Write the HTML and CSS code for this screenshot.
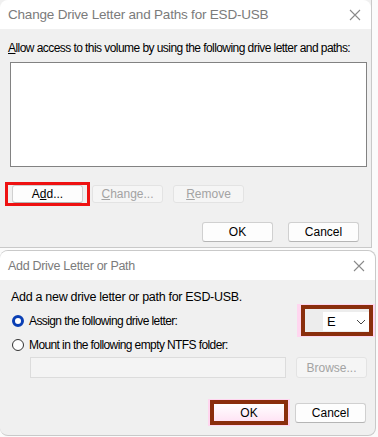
FILE: index.html
```html
<!DOCTYPE html>
<html lang="en">
  <head>
    <meta charset="UTF-8" />
    <title>Drive Letter and Paths</title>
    <link rel="stylesheet" href="styles.css">
  </head>
  <body>
    <div class="dialog dialog--paths">
      <div class="titlebar">
        <span class="titlebar__text">Change Drive Letter and Paths for ESD-USB</span>
        <svg class="titlebar__close" width="12" height="12" viewBox="0 0 12 12">
          <path d="M1 1 L11 11 M11 1 L1 11" stroke="#8a8a8a" stroke-width="1.1" fill="none" />
        </svg>
      </div>
      <div class="dialog__body">
        <div class="label"><u>A</u>llow access to this volume by using the following drive letter and paths:</div>
        <div class="listbox"></div>
        <div class="row row--actions">
          <div class="marked-red">
            <button class="btn">A<u>d</u>d...</button>
          </div>
          <button class="btn" disabled><u>C</u>hange...</button>
          <button class="btn" disabled><u>R</u>emove</button>
        </div>
        <div class="row row--footer">
          <button class="btn">OK</button>
          <button class="btn">Cancel</button>
        </div>
      </div>
    </div>

    <div class="dialog dialog--add">
      <div class="titlebar">
        <span class="titlebar__text titlebar__text--small">Add Drive Letter or Path</span>
        <svg class="titlebar__close" width="12" height="12" viewBox="0 0 12 12">
          <path d="M1 1 L11 11 M11 1 L1 11" stroke="#8a8a8a" stroke-width="1.1" fill="none" />
        </svg>
      </div>
      <div class="dialog__body">
        <div class="label label--intro">Add a new drive letter or path for ESD-USB.</div>
        <div class="option option--assign">
          <span class="radio radio--on"></span>
          <span class="option__text">Assign the following drive letter:</span>
          <div class="marked-brown marked-brown--select">
            <div class="select-frame">
              <div class="select">
                <span>E</span>
                <svg width="10" height="6" viewBox="0 0 10 6">
                  <path d="M1 1 L5 5 L9 1" stroke="#444" stroke-width="1" fill="none" />
                </svg>
              </div>
            </div>
          </div>
        </div>
        <div class="option option--mount">
          <span class="radio"></span>
          <span class="option__text">Mount in the following empty NTFS folder:</span>
        </div>
        <div class="row row--folder">
          <div class="textbox"></div>
          <button class="btn" disabled>Browse...</button>
        </div>
        <div class="row row--footer2">
          <div class="marked-brown">
            <button class="btn btn--ok">OK</button>
          </div>
          <button class="btn">Cancel</button>
        </div>
      </div>
    </div>
  </body>
</html>
```

FILE: styles.css
```css
* {
  margin: 0;
  padding: 0;
  box-sizing: border-box;
}

body {
  background-color: #fbfbfb;
  font-family: "Liberation Sans", Arial, sans-serif;
  font-size: 12px;
  color: #000;
  width: 378px;
  height: 437px;
  overflow: hidden;
}

.dialog {
  background-color: #f0f0f0;
  border: 1px solid #c9c9c9;
  display: flex;
  flex-direction: column;
}

.dialog--paths {
  width: 372px;
  height: 248px;
  border-top: none;
  border-left: none;
}

.dialog--add {
  width: 376px;
  height: 186px;
  margin-top: 2px;
  border-radius: 8px;
  border-left: none;
}

.titlebar {
  height: 29px;
  background-color: #fff;
  display: flex;
  align-items: center;
  justify-content: space-between;
  padding: 0 10px 0 8px;
  border-radius: 8px 8px 0 0;
}

.titlebar__text {
  font-size: 13.5px;
  color: #7b7b7b;
  letter-spacing: -0.2px;
}

.titlebar__text--small {
  font-size: 12.5px;
  letter-spacing: -0.3px;
}

.dialog__body {
  display: flex;
  flex-direction: column;
  padding: 0 0 0 8px;
}

.label {
  margin-top: 12px;
  line-height: 15px;
  letter-spacing: -0.56px;
}

.listbox {
  width: 357px;
  height: 105px;
  margin: 6px 0 0 2px;
  background-color: #fff;
  border: 1px solid #828282;
}

.row {
  display: flex;
  align-items: center;
}

.btn {
  width: 71px;
  height: 19px;
  font-family: inherit;
  font-size: 12px;
  color: #000;
  background-color: #fdfdfd;
  border: 1px solid #d0d0d0;
  border-bottom-color: #b5b5b5;
  border-radius: 3px;
}

.btn:disabled {
  color: #a3a3a3;
  background-color: #f5f5f5;
  border-color: #e3e3e3;
}

.row--actions {
  margin: 15px 0 0 -3px;
}

.marked-red {
  border: 3px solid #ee1111;
  padding: 0 4px;
  margin-right: 2px;
}

.marked-red .btn {
  height: 18px;
}

.row--actions > .btn {
  height: 18px;
  margin-right: 10px;
}

.row--footer {
  margin: 16px 0 0 194px;
  gap: 15px;
}

.row--footer .btn {
  height: 20px;
}

.label--intro {
  margin: 10px 0 0 3px;
  line-height: 14px;
  font-size: 12.5px;
  letter-spacing: -0.3px;
}

.option {
  display: flex;
  align-items: center;
  margin-left: 4px;
}

.option--assign {
  height: 33px;
}

.option__text {
  margin-left: 5px;
  font-size: 12px;
  letter-spacing: -0.6px;
}

.radio {
  width: 12px;
  height: 12px;
  border-radius: 50%;
  border: 1px solid #333;
  background-color: #fff;
}

.radio--on {
  border: 3.5px solid #0a3fb4;
}

.marked-brown {
  background-color: #ffd6ef;
  padding: 1px 2px;
}

.marked-brown--select {
  margin-left: auto;
  width: 78px;
  padding: 1px 2px 1px 4px;
}

.select-frame {
  height: 31px;
  border: 4px solid #8a2e0c;
  background-color: #ededed;
  padding: 3px 0 1px 18px;
}

.select {
  height: 100%;
  display: flex;
  align-items: center;
  justify-content: space-between;
  padding: 0 3px 0 4px;
  background-color: #fff;
}

.select span {
  font-size: 13px;
}

.option--mount {
  height: 15px;
}

.row--folder {
  margin: 5px 0 0 22px;
  gap: 10px;
}

.textbox {
  width: 256px;
  height: 21px;
  background-color: #f4f4f4;
  border: 1px solid #dcdcdc;
}

.row--folder .btn {
  height: 21px;
}

.row--footer2 {
  margin: 21px 0 0 200px;
  gap: 5px;
}

.btn--ok {
  width: 78px;
  height: 25px;
  border: 4px solid #8a2e0c;
  border-radius: 0;
  background: linear-gradient(#fff, #ffe4f5);
}

.row--footer2 > .btn {
  height: 20px;
}
```
